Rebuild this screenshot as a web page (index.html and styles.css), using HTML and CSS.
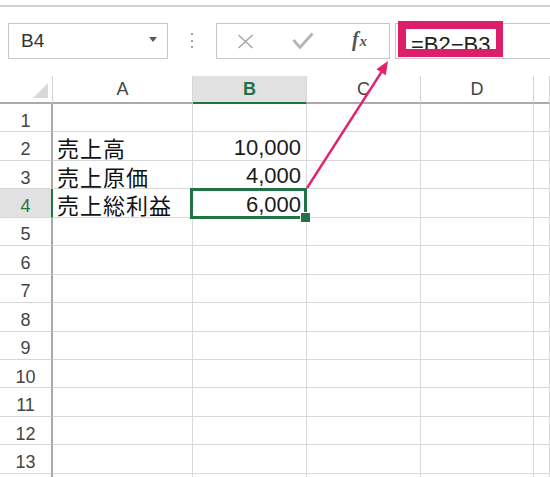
FILE: index.html
```html
<!DOCTYPE html>
<html lang="ja">
<head>
<meta charset="utf-8">
<title>Excel</title>
<link rel="stylesheet" href="styles.css">
</head>
<body>
<div class="topline"></div>
<div class="toolbar">
  <div class="namebox"><span class="ref">B4</span><span class="caret"></span></div>
  <div class="sep"><i></i><i></i><i></i></div>
  <div class="btns">
    <div class="btn"><svg width="17" height="15" viewBox="0 0 17 15"><path d="M1.5 1 L15.5 14 M15.5 1 L1.5 14" stroke="#a9a9a9" stroke-width="1.6" fill="none"/></svg></div>
    <div class="btn"><svg width="22" height="18" viewBox="0 0 22 18"><path d="M1.5 8 L8 15.5 L20.5 1.5" stroke="#b4b4b4" stroke-width="2.8" fill="none"/></svg></div>
    <div class="btn"><span class="fx">f<span class="fxx">x</span></span></div>
  </div>
  <div class="formula">
    <div class="hl"><div class="hl-inner">=B2−B3</div></div>
  </div>
</div>
<div class="sheet">
  <div class="corner"><svg width="53" height="26" viewBox="0 0 53 26"><path d="M48 7 L48 22 L33 22 Z" fill="#d9d9d9"/></svg></div>
  <div class="ch">A</div><div class="ch sel">B</div><div class="ch">C</div><div class="ch">D</div><div class="ch"></div>

  <div class="rh">1</div><div class="c"></div><div class="c"></div><div class="c"></div><div class="c"></div><div class="c"></div>
  <div class="rh">2</div><div class="c jp">売上高</div><div class="c num">10,000</div><div class="c"></div><div class="c"></div><div class="c"></div>
  <div class="rh">3</div><div class="c jp">売上原価</div><div class="c num">4,000</div><div class="c"></div><div class="c"></div><div class="c"></div>
  <div class="rh sel">4</div><div class="c jp">売上総利益</div><div class="c num active">6,000<span class="frame"></span><span class="handle"></span></div><div class="c"></div><div class="c"></div><div class="c"></div>
  <div class="rh">5</div><div class="c"></div><div class="c"></div><div class="c"></div><div class="c"></div><div class="c"></div>
  <div class="rh">6</div><div class="c"></div><div class="c"></div><div class="c"></div><div class="c"></div><div class="c"></div>
  <div class="rh">7</div><div class="c"></div><div class="c"></div><div class="c"></div><div class="c"></div><div class="c"></div>
  <div class="rh">8</div><div class="c"></div><div class="c"></div><div class="c"></div><div class="c"></div><div class="c"></div>
  <div class="rh">9</div><div class="c"></div><div class="c"></div><div class="c"></div><div class="c"></div><div class="c"></div>
  <div class="rh">10</div><div class="c"></div><div class="c"></div><div class="c"></div><div class="c"></div><div class="c"></div>
  <div class="rh">11</div><div class="c"></div><div class="c"></div><div class="c"></div><div class="c"></div><div class="c"></div>
  <div class="rh">12</div><div class="c"></div><div class="c"></div><div class="c"></div><div class="c"></div><div class="c"></div>
  <div class="rh">13</div><div class="c"></div><div class="c"></div><div class="c"></div><div class="c"></div><div class="c"></div>
  <div class="rh"></div><div class="c"></div><div class="c"></div><div class="c"></div><div class="c"></div><div class="c"></div>
</div>
<svg class="arrow" width="550" height="477" viewBox="0 0 550 477">
  <line x1="307" y1="188" x2="381.5" y2="72" stroke="#e0246e" stroke-width="2.4"/>
  <path d="M388 61 L385.8 75.2 L376.4 69.2 Z" fill="#e0246e"/>
</svg>
</body>
</html>
```

FILE: styles.css
```css
* { box-sizing: border-box; }
html, body { margin: 0; padding: 0; }
body {
  width: 550px;
  height: 477px;
  overflow: hidden;
  position: relative;
  background: #fff;
  font-family: "Liberation Sans", Arial, sans-serif;
  color: #444;
}
.topline {
  margin-top: 5px;
  height: 2px;
  background: #cfcfcf;
}
.toolbar {
  display: flex;
  margin-top: 16px;
  height: 36px;
}
.namebox {
  margin-left: 8px;
  width: 160px;
  height: 36px;
  border: 1px solid #c6c6c6;
  display: flex;
  align-items: center;
  padding-left: 12px;
}
.ref {
  font-size: 19px;
  color: #333;
}
.caret {
  margin-left: auto;
  margin-right: 10px;
  margin-bottom: 3px;
  width: 0;
  height: 0;
  border-left: 4.5px solid transparent;
  border-right: 4.5px solid transparent;
  border-top: 5px solid #5a5a5a;
}
.sep {
  width: 48px;
  display: flex;
  flex-direction: column;
  align-items: center;
  justify-content: center;
  gap: 4.5px;
  padding-bottom: 1px;
}
.sep i {
  display: block;
  width: 2px;
  height: 2px;
  background: #a0a0a0;
}
.btns {
  width: 174px;
  height: 36px;
  border: 1px solid #c6c6c6;
  display: grid;
  grid-template-columns: repeat(3, 57px);
  align-items: center;
  justify-items: center;
}
.btn { display: flex; align-items: center; justify-content: center; height: 34px; }
.btn svg { display: block; }
.fx {
  font-family: "Liberation Serif", serif;
  font-style: italic;
  font-weight: bold;
  font-size: 20px;
  color: #555;
  margin-top: -3px;
}
.fxx {
  font-size: 15px;
  margin-left: 1px;
}
.formula {
  margin-left: 5px;
  flex: 1;
  height: 36px;
  border: 1px solid #c6c6c6;
  border-right: none;
  position: relative;
}
.hl {
  position: absolute;
  left: 2px;
  top: -3px;
  width: 105px;
  height: 36px;
  border: 8px solid #dd1f6b;
  border-right-width: 7px;
  background: #fff;
}
.hl-inner {
  height: 20px;
  overflow: hidden;
  font-size: 22px;
  line-height: 26px;
  padding-left: 5px;
  padding-top: 3px;
  color: #222;
  white-space: nowrap;
}
.sheet {
  margin-top: 17px;
  display: grid;
  grid-template-columns: 53px 140px 114px 114px 113px 1fr;
  grid-template-rows: 28px repeat(13, 28.45px) 4px;
}
.corner {
  border-right: 1px solid #d6d6d6;
  border-bottom: 2px solid #ababab;
}
.corner svg { display: block; }
.ch {
  border-right: 1px solid #d6d6d6;
  border-bottom: 2px solid #ababab;
  display: flex;
  align-items: center;
  justify-content: center;
  font-size: 18px;
  color: #444;
}
.ch.sel {
  background: #e1e1e1;
  color: #217346;
  font-weight: bold;
  border-bottom-color: #217346;
}
.rh {
  border-right: 2px solid #a8a8a8;
  border-bottom: 1px solid #d6d6d6;
  display: flex;
  align-items: center;
  justify-content: center;
  font-size: 18px;
  line-height: 20px;
  color: #444;
  padding-top: 6px;
}
.rh.sel {
  background: #e1e1e1;
  color: #217346;
  border-right-color: #217346;
}
.c {
  border-right: 1px solid #d9d9d9;
  border-bottom: 1px solid #d9d9d9;
  display: flex;
  align-items: center;
  position: relative;
}
.jp {
  font-family: "Noto Sans CJK JP", "Liberation Sans", sans-serif;
  font-size: 22px;
  line-height: 22px;
  letter-spacing: 1px;
  color: #111;
  padding-left: 4px;
  padding-top: 2px;
  white-space: nowrap;
}
.num {
  justify-content: flex-end;
  align-items: flex-end;
  font-size: 22px;
  line-height: 22px;
  color: #1a1a1a;
  padding-right: 5px;
  padding-bottom: 1px;
}
.active { z-index: 2; }
.frame {
  position: absolute;
  left: -3px;
  top: -1px;
  right: -1px;
  bottom: -2px;
  border: 3px solid #217346;
}
.handle {
  position: absolute;
  right: -5px;
  bottom: -6px;
  width: 11px;
  height: 11px;
  background: #217346;
  border: 1.5px solid #fff;
}
.arrow {
  position: absolute;
  left: 0;
  top: 0;
  pointer-events: none;
  z-index: 3;
}
```
